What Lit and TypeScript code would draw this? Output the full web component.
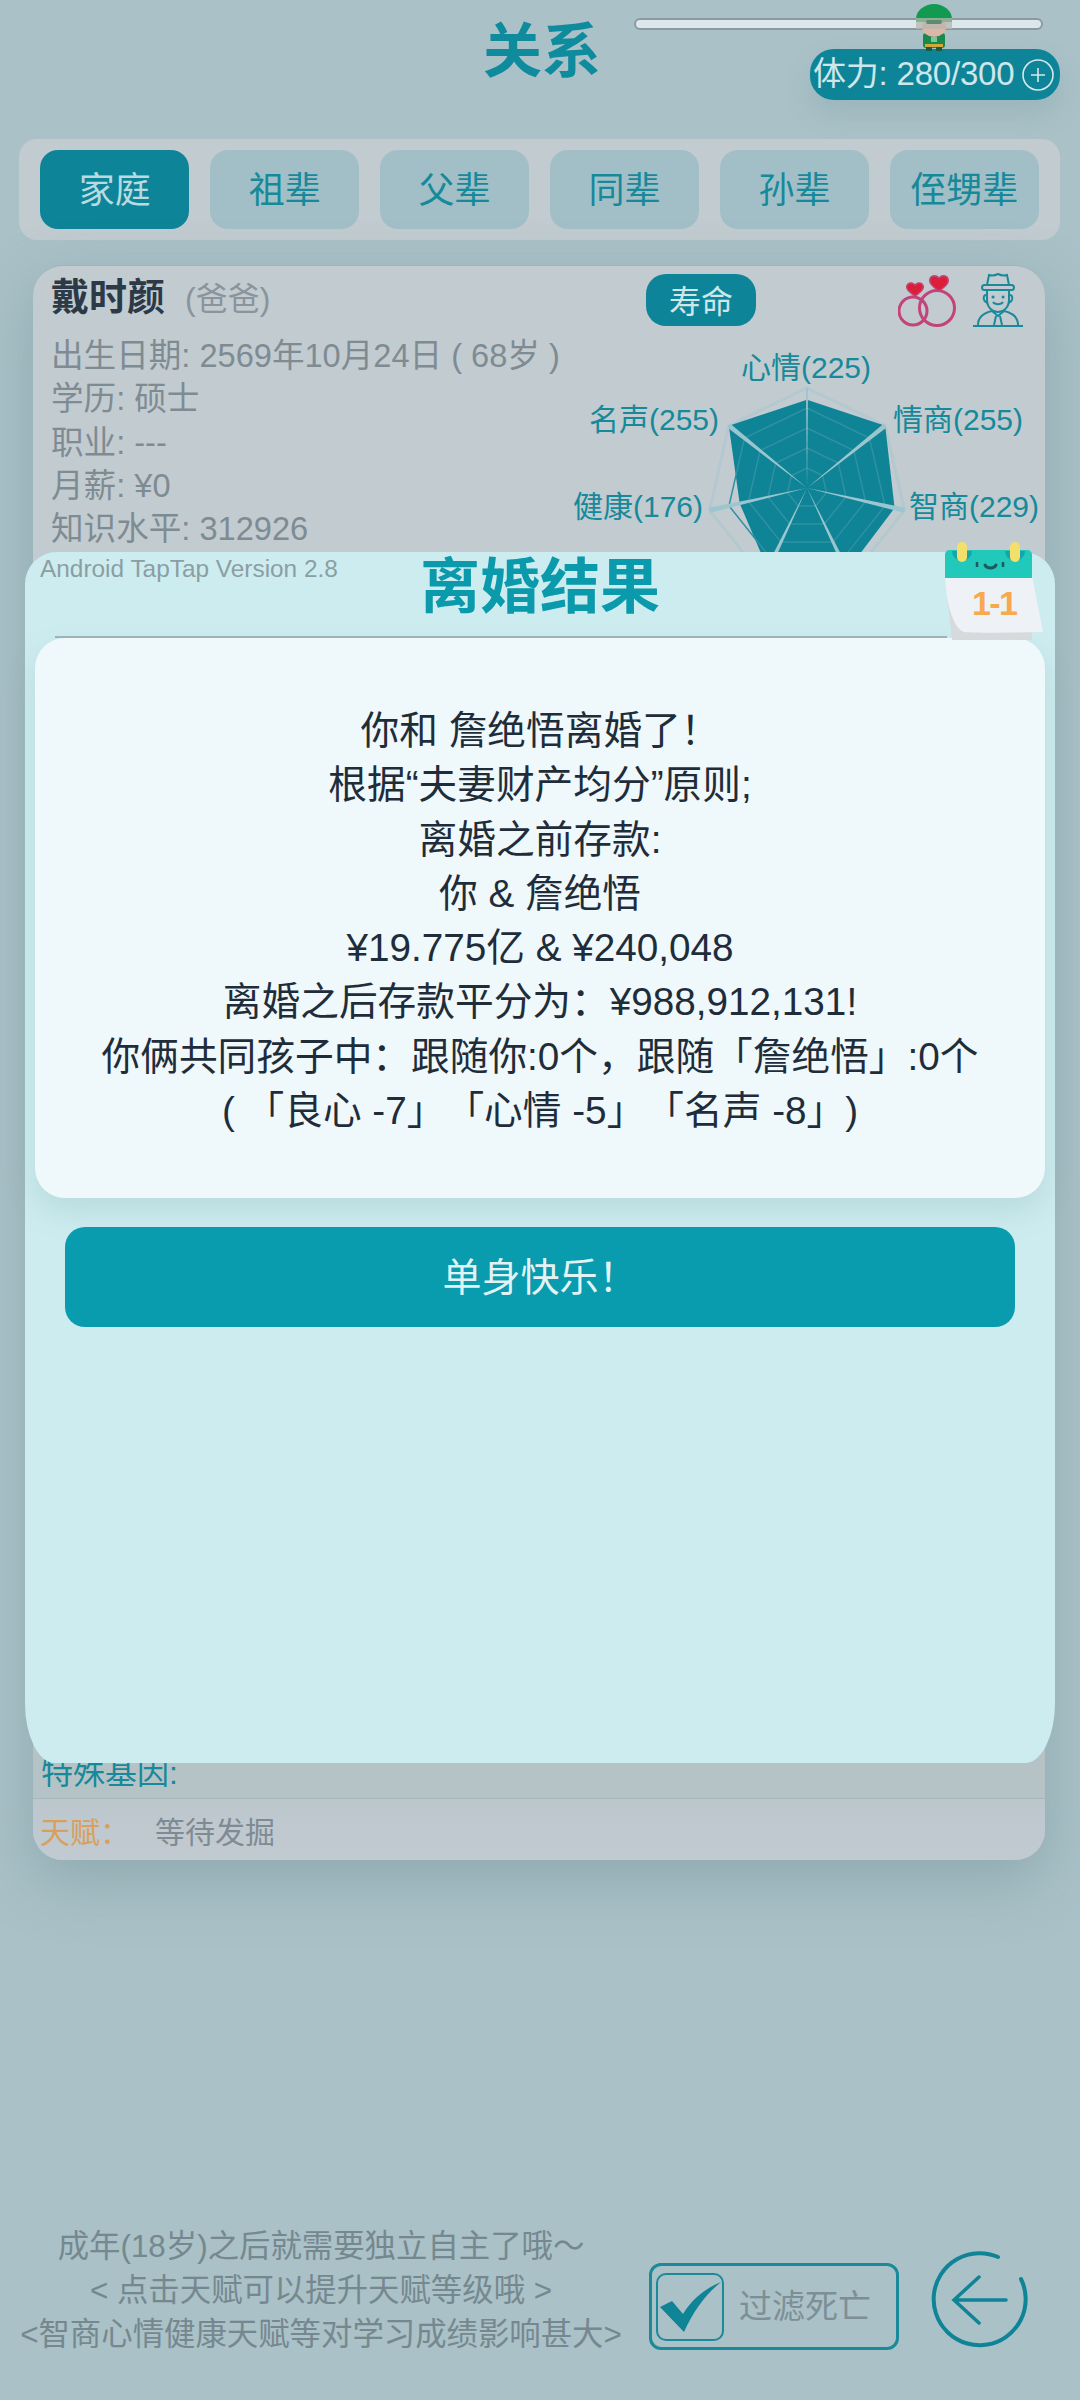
import { LitElement, html, css, svg } from "lit";
import { customElement } from "lit/decorators.js";

const CX = 262, CY = 142, R = 100;
const pt = (i: number, r: number) => {
  const a = (i * 2 * Math.PI) / 7;
  return [CX + Math.sin(a) * r, CY - Math.cos(a) * r];
};
const poly = (rs: number[]) => rs.map((r, i) => pt(i, r).map((v) => v.toFixed(1)).join(",")).join(" ");
const spoke = (i: number, w: number) => {
  const a = (i * 2 * Math.PI) / 7;
  const [x, y] = pt(i, R);
  const dx = Math.cos(a) * w, dy = Math.sin(a) * w;
  return `${CX},${CY} ${(x + dx).toFixed(1)},${(y + dy).toFixed(1)} ${(x - dx).toFixed(1)},${(y - dy).toFixed(1)}`;
};
const vals = [225, 255, 229, 235, 230, 176, 255];
const labels = [
  { t: "心情(225)", x: 261, y: 32 },
  { t: "情商(255)", x: 413, y: 84 },
  { t: "智商(229)", x: 429, y: 171 },
  { t: "健康(176)", x: 93, y: 171 },
  { t: "名声(255)", x: 109, y: 84 },
];

@customElement("app-root")
export class AppRoot extends LitElement {
  static styles = css`
    :host { display: block; width: 1080px; height: 2400px; position: relative; overflow: hidden;
      background: #a9c1c7; font-family: "Liberation Sans", "Noto Sans CJK SC", sans-serif; text-spacing-trim: space-all; }
    .page { height: 2400px; display: flex; flex-direction: column; padding: 0 19px; box-sizing: border-box; }
    .header { height: 139px; display: grid; grid-template-columns: 1fr auto 1fr; column-gap: 33px; margin-right: -17px; }
    .title { font-size: 59px; font-weight: 700; color: #0e8c9e; padding: 19px 0 0 0; line-height: 66px; }
    .stamina { display: flex; flex-direction: column; align-items: flex-end; padding-top: 18px; position: relative; }
    .slider { width: 405px; height: 8px; margin-right: 35px; border: 2px solid #8a9ba0; border-radius: 6px; background: #dbe7ea; }
    .hero { position: absolute; left: 279px; top: 3px; }
    .pill { margin-top: 19px; margin-right: 18px; width: 250px; height: 51px; border-radius: 24px; background: #0e8498; color: #cfe6ea;
      font-size: 33px; display: flex; align-items: center; padding: 0 0 0 3px; box-sizing: border-box; gap: 8px;
      box-shadow: 0 14px 24px rgba(120,150,158,.25); white-space: nowrap; }
    .pill span { margin-top: -7px; letter-spacing: -.2px; }
    .tabs { width: 1041px; height: 101px; background: #c1cbd0; border-radius: 18px; display: flex; gap: 20.5px;
      padding: 11px 21px; box-sizing: border-box; }
    .tab { width: 150px; height: 79px; border-radius: 18px; background: #a2bfc7; color: #16899a; font-size: 36px;
      display: flex; align-items: center; justify-content: center; white-space: nowrap; padding-bottom: 5px; box-sizing: border-box; }
    .tab.on { background: #0e8498; color: #b7dbe0; }
    .card { margin: 25px 0 0 14px; width: 1012px; height: 1595px; border-radius: 30px; background: #c2cbd0; display: flex; flex-direction: column;
      box-shadow: 0 20px 60px rgba(110,140,148,.45); border-top: 1px solid #9fb5ba; box-sizing: border-box; }
    .top { height: 68px; display: grid; grid-template-columns: 595px 110px 1fr; align-items: center; padding-left: 18px; box-sizing: border-box; }
    .name { font-size: 38px; font-weight: 700; color: #2c3a48; display: flex; align-items: baseline; gap: 20px; margin-top: -13px; }
    .rel { font-size: 32px; font-weight: 400; color: #8a949c; }
    .life { height: 52px; background: #0e8498; color: #cfe6ea; border-radius: 20px; font-size: 32px; display: flex; align-items: center; justify-content: center; padding-bottom: 3px; box-sizing: border-box; }
    .icons { display: flex; justify-content: flex-end; align-items: center; gap: 13px; padding-right: 22px; }
    .body { display: flex; height: 290px; }
    .info { width: 512px; padding-left: 18px; box-sizing: border-box; font-size: 32.6px; line-height: 43.3px; color: #7f8b93; white-space: nowrap; }
    .radar { margin-top: 12px; display: block; }
    .radar text { font-size: 30px; fill: #16899a; text-anchor: middle; font-family: "Liberation Sans", "Noto Sans CJK SC", sans-serif; }
    .spacer { flex: 1; }
    .gene-row { border-bottom: 1px solid #a5b7bd; height: 60px; background: #b6c3c6; padding: 18px 0 0 8px; font-size: 32px; line-height: 32px; color: #16899a; box-sizing: border-box; overflow: hidden; }
    .talent { height: 61px; display: flex; align-items: center; padding-left: 7px; font-size: 30px; gap: 25px; background: linear-gradient(#bcc7cd, #c2cad1); border-radius: 0 0 30px 30px; }
    .t1 { color: #d9a05a; }
    .t2 { color: #7f8b93; }
    .footer { margin-top: auto; height: 160px; display: flex; align-items: flex-start; margin-left: -19px; margin-bottom: 30px; }
    .hints { width: 642px; padding-top: 15px; text-align: center; font-size: 31.4px; line-height: 44px; color: #76888f; white-space: nowrap; flex: none; box-sizing: border-box; }
    .filter { margin: 53px 0 0 7px; width: 250px; height: 87px; border: 3px solid #1a8a9a; border-radius: 12px; box-sizing: border-box; display: flex; align-items: center; padding-left: 4px; gap: 15px; font-size: 33px; color: #7d8f96; white-space: nowrap; }
    .filter span { margin-top: -5px; }
    .box { width: 68px; height: 68px; border: 2px solid #1a8a9a; border-radius: 10px; box-sizing: border-box; display: flex; align-items: center; justify-content: center; }
    .back { margin: 40px 0 0 30px; display: block; }
    .modal { position: absolute; left: 25px; top: 552px; width: 1030px; height: 1211px; background: #cdecef; box-sizing: border-box; padding: 0 10px;
      border-radius: 32px 32px 30px 30px / 32px 32px 60px 60px; display: flex; flex-direction: column; }
    .mhead { height: 84px; display: flex; justify-content: center; border-bottom: 2px solid #9db5ba; margin: 0 98px 0 20px; }
    .mtitle { font-size: 60px; font-weight: 700; color: #0a9aab; line-height: 64px; white-space: nowrap; margin: 4px 0 0 78px; }
    .ver { position: absolute; left: 15px; top: 3px; font-size: 24.4px; color: #8b9ea3; white-space: nowrap; }
    .cal { position: absolute; left: 915px; top: -12px; }
    .sheet { height: 560px; background: #eff8fa; border-radius: 30px; box-sizing: border-box; padding-top: 66px; text-align: center;
      font-size: 38.7px; line-height: 54.3px; color: #1f2d3a; white-space: nowrap; box-shadow: 0 14px 30px rgba(90,130,135,.16); }
    .ok { margin: 29px 30px 0 30px; height: 100px; background: #089cae; border-radius: 20px; color: #e3f3f5; font-size: 39px; display: flex; align-items: center; justify-content: center; padding-bottom: 6px; box-sizing: border-box; }
  `;

  private hero() {
    return html`<svg class="hero" width="42" height="48" viewBox="0 0 42 48">
      <rect x="10" y="30" width="22" height="15" rx="3" fill="#178a4c"/>
      <rect x="13" y="44" width="6" height="4" fill="#1c5a3a"/><rect x="23" y="44" width="6" height="4" fill="#1c5a3a"/>
      <rect x="12" y="41" width="18" height="3" fill="#d1a83a"/>
      <rect x="18" y="34" width="6" height="5" fill="#7cc79a"/>
      <ellipse cx="21" cy="24" rx="12" ry="10" fill="#dcb6a6"/>
      <path d="M3 16a18 15 0 0 1 36 0v3H3z" fill="#129a50"/>
      <rect x="3" y="15" width="36" height="11" fill="#b7b5ad" opacity=".75"/>
      <rect x="13" y="17" width="16" height="4" rx="2" fill="#5c8c70"/>
    </svg>`;
  }

  private rings() {
    return html`<svg width="62" height="56" viewBox="0 0 62 56" fill="none">
      <circle cx="15" cy="39" r="14" stroke="#c2447a" stroke-width="3"/>
      <circle cx="39" cy="36" r="17.5" stroke="#c2447a" stroke-width="3"/>
      <path d="M17 24c-8-5-10-9-7-12 2-2 5-1 7 1 2-2 5-3 7-1 3 3 1 7-7 12z" fill="#dc1f38" stroke="#c2447a" stroke-width="1.5"/>
      <path d="M41 19c-9-6-11-10-8-14 3-2 6-1 8 1 2-2 5-3 8-1 3 4 1 8-8 14z" fill="#dc1f38" stroke="#c2447a" stroke-width="1.5"/>
    </svg>`;
  }

  private person() {
    return html`<svg width="50" height="54" viewBox="0 0 50 54" fill="none" stroke="#1a8a9a" stroke-width="2">
      <path d="M14 12l2-10c3 1 5 1 9-1 4 2 6 2 9 1l2 10"/>
      <rect x="9" y="12" width="32" height="5" rx="2.5"/>
      <path d="M14 17v10c0 7 5 12 11 12s11-5 11-12V17"/>
      <path d="M14 22c-4-1-5 6 1 8M36 22c4-1 5 6-1 8"/>
      <path d="M20 29c2 3 8 3 10 0" />
      <path d="M20 24h.1M30 24h.1" stroke-linecap="round" stroke-width="3"/>
      <path d="M19 38c-9 2-14 6-14 14M31 38c9 2 14 6 14 14"/>
      <path d="M19 38l6 5 6-5M23 43l-2 9M27 43l2 9"/>
      <path d="M0 53h50"/>
    </svg>`;
  }

  private radar() {
    const rings = [0.8, 0.6, 0.4, 0.2];
    return html`<svg class="radar" width="500" height="278" viewBox="0 0 500 278">
      ${svg`
        <polygon points=${poly(vals.map(() => R))} fill="none" stroke="#b4c9cf" stroke-width="3"/>
        <polygon points=${poly(vals.map((v) => (v / 255) * R))} fill="#0e8496"/>
        ${rings.map((k) => svg`<polygon points=${poly(vals.map(() => R * k))} fill="none" stroke="#2f91a2" stroke-width="1.5"/>`)}
        ${vals.map((_, i) => svg`<polygon points=${spoke(i, i === 0 ? 1 : 2.5)} fill="#9cc6cf"/>`)}
        ${labels.map((l) => svg`<text x=${l.x} y=${l.y}>${l.t}</text>`)}
      `}
    </svg>`;
  }

  private calendar() {
    return html`<svg class="cal" width="106" height="100" viewBox="0 0 106 100">
      <path d="M5 36h87v64H12z" fill="#d6dadd"/>
      <path d="M5 36h87l11 56c-30 1-66 1-79 0C12 88 6 60 5 36z" fill="#eef2f6"/>
      <path d="M5 15c0-3 2-5 5-5h77c3 0 5 2 5 5v23H5z" fill="#20c9ba"/>
      <path d="M12 11a10 10 0 0 0 20 0zM65 11a10 10 0 0 0 20 0z" fill="#14a5ad"/>
      <rect x="17" y="2" width="10" height="20" rx="5" fill="#f3df6a"/>
      <rect x="70" y="2" width="10" height="20" rx="5" fill="#f3df6a"/>
      <path d="M37 22v5M63 22v5" stroke="#1d5a60" stroke-width="2.5"/>
      <path d="M45 25c2 4 9 4 11 0" fill="none" stroke="#1d5a60" stroke-width="3" stroke-linecap="round"/>
      <text x="55" y="75" text-anchor="middle" font-size="34" font-weight="700" fill="#f6a94e" font-family="Liberation Sans, sans-serif" textLength="46">1-1</text>
    </svg>`;
  }

  render() {
    return html`
      <div class="page">
        <div class="header">
          <div></div>
          <div class="title">关系</div>
          <div class="stamina">
            <div class="slider"></div>
            ${this.hero()}
            <div class="pill"><span>体力: 280/300</span>
              <svg width="32" height="32" viewBox="0 0 32 32" fill="none" stroke="#d5e9ec" stroke-width="1.6"><circle cx="16" cy="16" r="15"/><path d="M16 9v14M9 16h14"/></svg>
            </div>
          </div>
        </div>
        <div class="tabs">
          ${["家庭", "祖辈", "父辈", "同辈", "孙辈", "侄甥辈"].map((t, i) => html`<div class="tab ${i === 0 ? "on" : ""}">${t}</div>`)}
        </div>
        <div class="card">
          <div class="top">
            <div class="name">戴时颜 <span class="rel">(爸爸)</span></div>
            <div class="life">寿命</div>
            <div class="icons">${this.rings()}${this.person()}</div>
          </div>
          <div class="body">
            <div class="info">
              <div>出生日期: 2569年10月24日 ( 68岁 )</div>
              <div>学历: 硕士</div>
              <div>职业: ---</div>
              <div>月薪: ¥0</div>
              <div>知识水平: 312926</div>
            </div>
            ${this.radar()}
          </div>
          <div class="spacer"></div>
          <div class="gene-row">特殊基因:</div>
          <div class="talent"><span class="t1">天赋：</span><span class="t2">等待发掘</span></div>
        </div>
        <div class="footer">
          <div class="hints">
            <div>成年(18岁)之后就需要独立自主了哦～</div>
            <div>&lt; 点击天赋可以提升天赋等级哦 &gt;</div>
            <div>&lt;智商心情健康天赋等对学习成绩影响甚大&gt;</div>
          </div>
          <div class="filter">
            <div class="box">
              <svg width="64" height="54" viewBox="0 0 64 54"><path d="M2 27l12-6 11 13C35 18 48 8 63 2 48 14 36 30 26 52z" fill="#0e8496"/></svg>
            </div>
            <span>过滤死亡</span>
          </div>
          <svg class="back" width="100" height="100" viewBox="0 0 100 100" fill="none" stroke="#0e8496" stroke-linecap="round">
            <path d="M69 7A46 46 0 1 0 92 29" stroke-width="4"/>
            <path d="M50 27L25 50l25 23M25 50h52" stroke-width="3.5"/>
          </svg>
        </div>
      </div>
      <div class="modal">
        <div class="ver">Android TapTap Version 2.8</div>
        ${this.calendar()}
        <div class="mhead"><div class="mtitle">离婚结果</div></div>
        <div class="sheet">
          <div>你和 詹绝悟离婚了！</div>
          <div>根据“夫妻财产均分”原则;</div>
          <div>离婚之前存款:</div>
          <div>你 &amp; 詹绝悟</div>
          <div>¥19.775亿 &amp; ¥240,048</div>
          <div>离婚之后存款平分为：¥988,912,131!</div>
          <div>你俩共同孩子中：跟随你:0个，跟随「詹绝悟」:0个</div>
          <div>( 「良心 -7」「心情 -5」「名声 -8」)</div>
        </div>
        <div class="ok">单身快乐！</div>
      </div>
    `;
  }
}
